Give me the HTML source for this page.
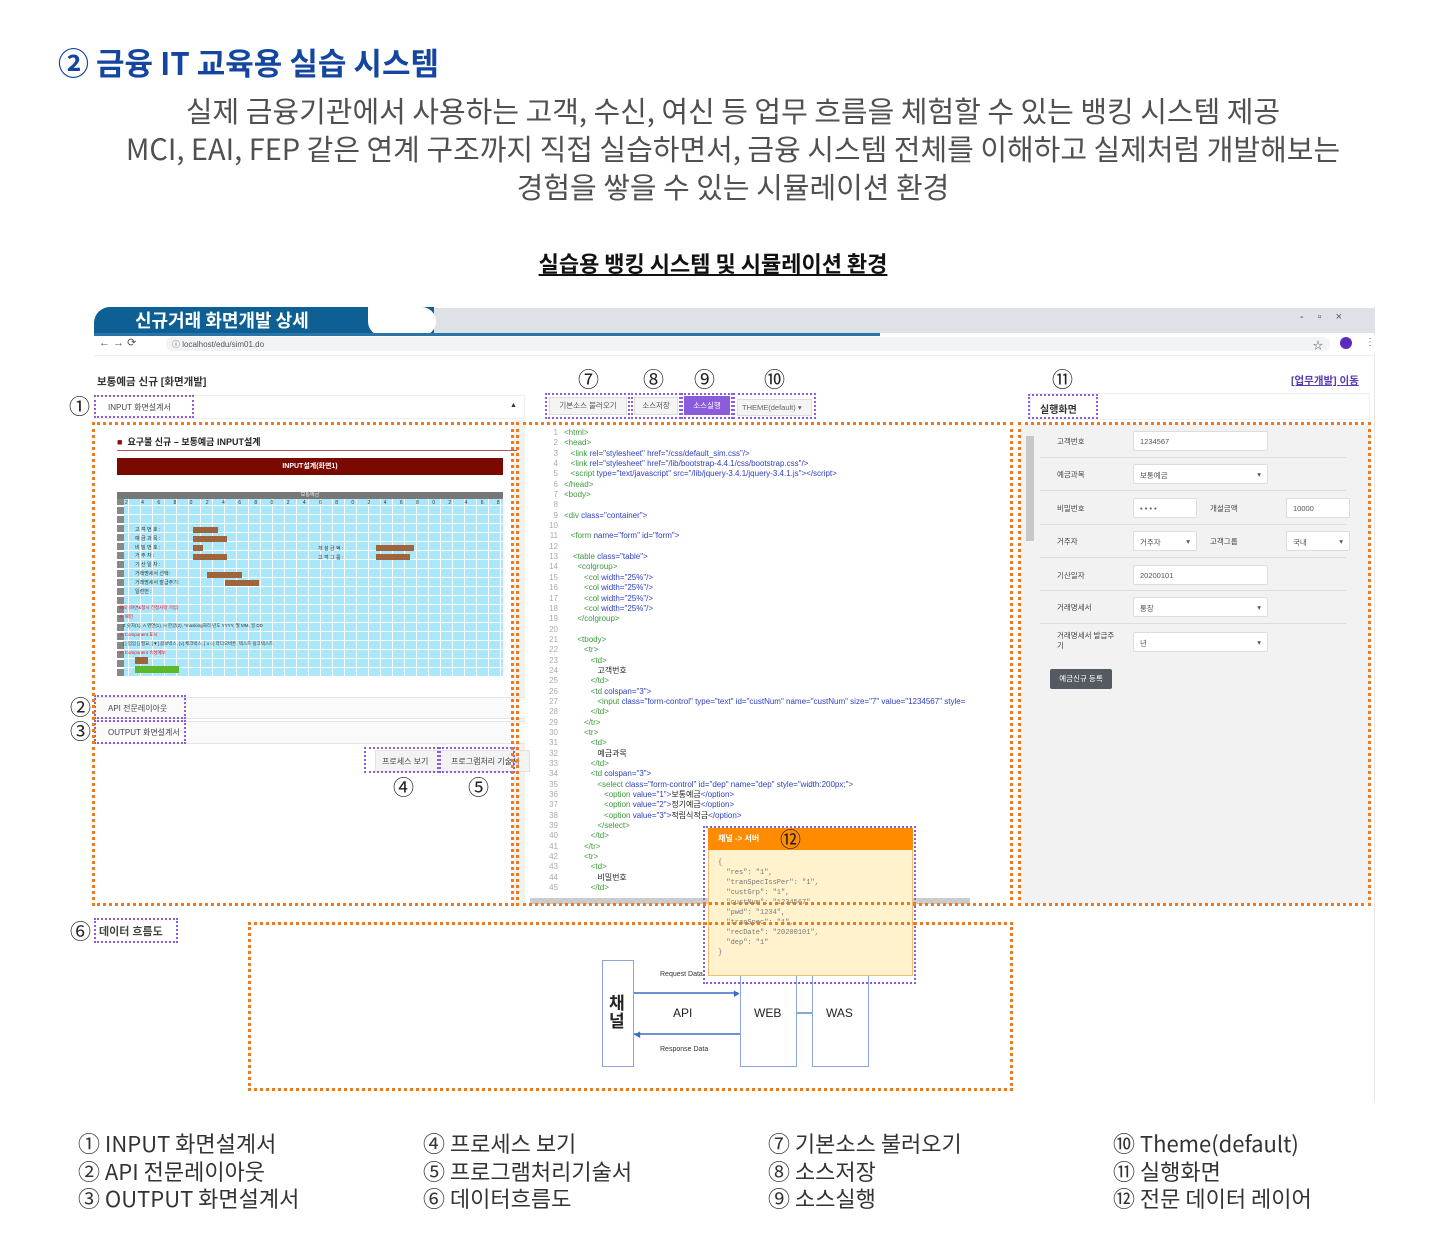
<!DOCTYPE html>
<html><head><meta charset="utf-8">
<style>
*{margin:0;padding:0;box-sizing:border-box}
body{width:1429px;height:1246px;background:#fff;position:relative;overflow:hidden;font-family:"Liberation Sans","Noto Sans CJK KR",sans-serif;color:#333}
.a{position:absolute;white-space:nowrap}
.od{position:absolute;border:3px dotted #ef7a1c}
.pd{position:absolute;border:2px dotted #8a5ce0}
.cn{position:absolute;font-size:21px;color:#222;font-family:"Noto Sans CJK KR",sans-serif;line-height:1}
.sub{position:absolute;left:0;width:1466px;text-align:center;font-size:29px;color:#505050;letter-spacing:0px;font-family:"Noto Sans CJK KR",sans-serif;line-height:1}
.tiny{font-size:8px;color:#444}
.code{position:absolute;left:530px;top:428px;font-family:"Liberation Sans","Noto Sans CJK KR",sans-serif;font-size:8px;line-height:10.35px;color:#2c3ec0}
.code div{white-space:nowrap}
.code i{font-style:normal;color:#aaa;display:inline-block;width:34px;text-align:right;padding-right:6px}
.g{color:#3a9a3a}.k{color:#222}
.lg{position:absolute;font-size:22px;color:#333;line-height:27.5px;font-family:"Noto Sans CJK KR",sans-serif}
.fr{position:absolute;font-size:7.5px;color:#444}
.inp{position:absolute;background:#fff;border:1px solid #ddd;border-radius:2px;font-size:7.5px;color:#555;padding:5px 6px;height:20px}
.hl{position:absolute;left:1040px;width:306px;height:1px;background:#ddd}
</style></head><body>

<div class="a" style="left:58px;top:43px;font-size:31px;font-weight:bold;color:#1446a0;font-family:'Noto Sans CJK KR',sans-serif;line-height:1.2">② 금융 IT 교육용 실습 시스템</div>
<div class="sub" style="top:96px">실제 금융기관에서 사용하는 고객, 수신, 여신 등 업무 흐름을 체험할 수 있는 뱅킹 시스템 제공</div>
<div class="sub" style="top:134px">MCI, EAI, FEP 같은 연계 구조까지 직접 실습하면서, 금융 시스템 전체를 이해하고 실제처럼 개발해보는</div>
<div class="sub" style="top:172px">경험을 쌓을 수 있는 시뮬레이션 환경</div>
<div class="a" style="left:0;width:1426px;text-align:center;top:247px;font-size:22px;font-weight:bold;color:#111;text-decoration:underline;letter-spacing:0px;font-family:'Noto Sans CJK KR',sans-serif">실습용 뱅킹 시스템 및 시뮬레이션 환경</div>

<!-- browser -->
<div class="a" style="left:94px;top:307px;width:1281px;height:795px;background:#fff;border-right:1px solid #e6e6e6"></div>
<div class="a" style="left:420px;top:308px;width:955px;height:25px;background:#dee1e6"></div>
<div class="a" style="left:94px;top:307px;width:340px;height:29px;background:#0e5f94;border-radius:16px 0 0 0"></div>
<div class="a" style="left:368px;top:307px;width:68px;height:29px;background:#fff;border-radius:0 30px 30px 30px"></div>
<div class="a" style="left:94px;top:333px;width:786px;height:3px;background:#2a74a8"></div>
<div class="a" style="left:135px;top:310px;font-size:18px;font-weight:bold;color:#fff;font-family:'Noto Sans CJK KR',sans-serif;line-height:1.2">신규거래 화면개발 상세</div>
<div class="a" style="left:1300px;top:311px;font-size:11px;color:#555;letter-spacing:14px">-▫×</div>
<div class="a" style="left:94px;top:336px;width:1281px;height:17px;background:#fff"></div>
<div class="a" style="left:166px;top:337px;width:1164px;height:14px;background:#f1f3f4;border-radius:7px"></div>
<div class="a" style="left:99px;top:336px;font-size:11px;color:#555">←  → ⟳</div>
<div class="a" style="left:172px;top:339px;font-size:8px;color:#555">ⓘ localhost/edu/sim01.do</div>
<div class="a" style="left:1313px;top:337px;font-size:10px;color:#555">☆</div>
<div class="a" style="left:1340px;top:337px;width:12px;height:12px;border-radius:6px;background:#5b2cc0"></div>
<div class="a" style="left:1365px;top:337px;font-size:10px;color:#666">⋮</div>
<div class="a" style="left:94px;top:355px;width:1281px;height:1px;background:#eee"></div>

<div class="a" style="left:97px;top:374px;font-size:10.5px;color:#333;font-weight:bold">보통예금 신규 [화면개발]</div>
<div class="a" style="left:1291px;top:373px;font-size:10.5px;color:#5a3ab0;text-decoration:underline;font-weight:bold">[업무개발] 이동</div>

<!-- left panel -->
<div class="a" style="left:94px;top:395px;width:431px;height:24px;background:#fff;border:1px solid #eee"></div>
<div class="pd" style="left:94px;top:395px;width:100px;height:23px"></div>
<div class="a tiny" style="left:108px;top:402px">INPUT 화면설계서</div>
<div class="a" style="left:510px;top:402px;font-size:7px">▲</div>
<div class="cn" style="left:69px;top:396px">①</div>
<div class="a" style="left:514px;top:420px;width:11px;height:485px;background:#f1f1f1"></div>

<div class="a" style="left:117px;top:435px;font-size:9px;font-weight:bold;color:#222"><span style="color:#900">■</span>&nbsp; 요구불 신규 – 보통예금 INPUT설계</div>
<div class="a" style="left:117px;top:450px;width:400px;height:1px;background:#b55"></div>
<div class="a" style="left:117px;top:458px;width:386px;height:17px;background:#7a0a00;color:#fff;font-size:7px;font-weight:bold;text-align:center;line-height:17px">INPUT설계(화면1)</div>
<div class="a" style="left:117px;top:492px;width:386px;height:7px;background:#777;color:#eee;font-size:5px;text-align:center;line-height:7px">보통예금</div>
<div class="a" style="left:117px;top:499px;width:386px;height:177px;background-color:#a9e8fb;background-image:repeating-linear-gradient(90deg,transparent 0,transparent 11px,#fff 11px,#fff 12px),repeating-linear-gradient(0deg,transparent 0,transparent 8px,#fff 8px,#fff 9px)"></div>
<div class="a" style="left:117px;top:499px;width:7px;height:177px;background:repeating-linear-gradient(0deg,#888 0,#888 7px,#fff 7px,#fff 9px)"></div>
<div class="a" style="left:125px;top:500px;width:376px;overflow:hidden;font-size:5px;color:#333;letter-spacing:6px">2 4 6 8 0 2 4 6 8 0 2 4 6 8 0 2 4 6 8 0 2 4 6 8 0 2 4 6 8 0</div>
<div class="a" style="left:135px;top:526px;font-size:5px;color:#333;line-height:8.8px">고 객 번 호 :<br>예 금 과 목 :<br>비 밀 번 호 :<br>거 주 자 :<br>기 산 일 자 :<br>거래명세서 선택:<br>거래명세서 발급주기:<br>일련번 : </div>
<div class="a" style="left:193px;top:527px;width:25px;height:6px;background:#a0643c"></div>
<div class="a" style="left:193px;top:536px;width:34px;height:6px;background:#a0643c"></div>
<div class="a" style="left:193px;top:545px;width:10px;height:6px;background:#a0643c"></div>
<div class="a" style="left:193px;top:554px;width:34px;height:6px;background:#a0643c"></div>
<div class="a" style="left:376px;top:545px;width:38px;height:6px;background:#a0643c"></div>
<div class="a" style="left:376px;top:554px;width:34px;height:6px;background:#a0643c"></div>
<div class="a" style="left:207px;top:572px;width:35px;height:6px;background:#a0643c"></div>
<div class="a" style="left:225px;top:580px;width:34px;height:6px;background:#a0643c"></div>
<div class="a" style="left:318px;top:545px;font-size:5px;color:#333;line-height:8.8px">개 설 금 액 :<br>고 객 그 룹 :</div>
<div class="a" style="left:119px;top:604px;font-size:4.5px;color:#e0102a;line-height:8.9px">메모 (화면&amp;정시 전정사항 기입)<br>※ 패턴<br><span style="color:#333">&nbsp;&nbsp;&nbsp;Z 숫자(1), A 영연(1), H 한글(2), *masking처리 년도 YYYY, 월 MM, 일 DD</span><br>※ Component 표시<br><span style="color:#333">&nbsp;&nbsp;&nbsp;[ ] 입입 [] 필요, [▼] 콤보박스, [v] 체크박스, [ o ○] 라디오버튼, 텍스트 링크텍스트</span><br>※ Component 속성예보</div>
<div class="a" style="left:135px;top:657px;width:13px;height:7px;background:#a0643c"></div>
<div class="a" style="left:135px;top:666px;width:44px;height:7px;background:#5bb82a"></div>

<div class="a" style="left:94px;top:697px;width:431px;height:22px;background:#fafafa;border-top:1px solid #e5e5e5;border-bottom:1px solid #e5e5e5"></div>
<div class="a" style="left:94px;top:721px;width:431px;height:23px;background:#fafafa;border-top:1px solid #e5e5e5;border-bottom:1px solid #e5e5e5"></div>
<div class="pd" style="left:94px;top:695px;width:92px;height:24px"></div>
<div class="pd" style="left:94px;top:720px;width:92px;height:24px"></div>
<div class="a tiny" style="left:108px;top:703px">API 전문레이아웃</div>
<div class="a tiny" style="left:108px;top:727px">OUTPUT 화면설계서</div>
<div class="cn" style="left:70px;top:697px">②</div>
<div class="cn" style="left:70px;top:721px">③</div>
<div class="a" style="left:375px;top:750px;width:155px;height:22px;background:#f3f3f3;border:1px solid #e2e2e2"></div>
<div class="pd" style="left:364px;top:747px;width:75px;height:26px"></div>
<div class="pd" style="left:439px;top:747px;width:76px;height:26px"></div>
<div class="a tiny" style="left:382px;top:756px">프로세스 보기</div>
<div class="a tiny" style="left:451px;top:756px">프로그램처리 기술서</div>
<div class="cn" style="left:393px;top:777px">④</div>
<div class="cn" style="left:468px;top:777px">⑤</div>
<div class="od" style="left:92px;top:422px;width:422px;height:484px"></div>

<!-- middle -->
<div class="pd" style="left:545px;top:393px;width:85px;height:26px"></div>
<div class="pd" style="left:631px;top:393px;width:50px;height:26px"></div>
<div class="pd" style="left:681px;top:393px;width:52px;height:26px"></div>
<div class="pd" style="left:733px;top:393px;width:83px;height:26px"></div>
<div class="a" style="left:549px;top:397px;width:78px;height:18px;background:#f4f4f4;border:1px solid #ddd;font-size:7.5px;color:#555;text-align:center;line-height:16px">기본소스 불러오기</div>
<div class="a" style="left:634px;top:397px;width:44px;height:18px;background:#f4f4f4;border:1px solid #ddd;font-size:7.5px;color:#555;text-align:center;line-height:16px">소스저장</div>
<div class="a" style="left:684px;top:396px;width:46px;height:19px;background:#8a5cdc;font-size:7.5px;color:#fff;text-align:center;line-height:19px">소스실행</div>
<div class="a" style="left:737px;top:399px;width:75px;height:17px;background:#f4f4f4;border:1px solid #ddd;font-size:7.5px;color:#666;line-height:16px;padding-left:4px">THEME(default) ▾</div>
<div class="cn" style="left:578px;top:369px">⑦</div>
<div class="cn" style="left:643px;top:369px">⑧</div>
<div class="cn" style="left:694px;top:369px">⑨</div>
<div class="cn" style="left:764px;top:369px">⑩</div>
<div class="a" style="left:530px;top:898px;width:440px;height:6px;background:#ccc"></div>
<div class="code">
<div><i>1</i><span class="g">&lt;html&gt;</span></div>
<div><i>2</i><span class="g">&lt;head&gt;</span></div>
<div><i>3</i>&nbsp;&nbsp;&nbsp;<span class="g">&lt;link</span> rel="stylesheet" href="/css/default_sim.css"/&gt;</div>
<div><i>4</i>&nbsp;&nbsp;&nbsp;<span class="g">&lt;link</span> rel="stylesheet" href="/lib/bootstrap-4.4.1/css/bootstrap.css"/&gt;</div>
<div><i>5</i>&nbsp;&nbsp;&nbsp;<span class="g">&lt;script</span> type="text/javascript" src="/lib/jquery-3.4.1/jquery-3.4.1.js"&gt;&lt;/script&gt;</div>
<div><i>6</i><span class="g">&lt;/head&gt;</span></div>
<div><i>7</i><span class="g">&lt;body&gt;</span></div>
<div><i>8</i></div>
<div><i>9</i><span class="g">&lt;div</span> class="container"&gt;</div>
<div><i>10</i></div>
<div><i>11</i>&nbsp;&nbsp;&nbsp;<span class="g">&lt;form</span> name="form" id="form"&gt;</div>
<div><i>12</i></div>
<div><i>13</i>&nbsp;&nbsp;&nbsp;&nbsp;<span class="g">&lt;table</span> class="table"&gt;</div>
<div><i>14</i>&nbsp;&nbsp;&nbsp;&nbsp;&nbsp;&nbsp;<span class="g">&lt;colgroup&gt;</span></div>
<div><i>15</i>&nbsp;&nbsp;&nbsp;&nbsp;&nbsp;&nbsp;&nbsp;&nbsp;&nbsp;<span class="g">&lt;col</span> width="25%"/&gt;</div>
<div><i>16</i>&nbsp;&nbsp;&nbsp;&nbsp;&nbsp;&nbsp;&nbsp;&nbsp;&nbsp;<span class="g">&lt;col</span> width="25%"/&gt;</div>
<div><i>17</i>&nbsp;&nbsp;&nbsp;&nbsp;&nbsp;&nbsp;&nbsp;&nbsp;&nbsp;<span class="g">&lt;col</span> width="25%"/&gt;</div>
<div><i>18</i>&nbsp;&nbsp;&nbsp;&nbsp;&nbsp;&nbsp;&nbsp;&nbsp;&nbsp;<span class="g">&lt;col</span> width="25%"/&gt;</div>
<div><i>19</i>&nbsp;&nbsp;&nbsp;&nbsp;&nbsp;&nbsp;<span class="g">&lt;/colgroup&gt;</span></div>
<div><i>20</i></div>
<div><i>21</i>&nbsp;&nbsp;&nbsp;&nbsp;&nbsp;&nbsp;<span class="g">&lt;tbody&gt;</span></div>
<div><i>22</i>&nbsp;&nbsp;&nbsp;&nbsp;&nbsp;&nbsp;&nbsp;&nbsp;&nbsp;<span class="g">&lt;tr&gt;</span></div>
<div><i>23</i>&nbsp;&nbsp;&nbsp;&nbsp;&nbsp;&nbsp;&nbsp;&nbsp;&nbsp;&nbsp;&nbsp;&nbsp;<span class="g">&lt;td&gt;</span></div>
<div><i>24</i>&nbsp;&nbsp;&nbsp;&nbsp;&nbsp;&nbsp;&nbsp;&nbsp;&nbsp;&nbsp;&nbsp;&nbsp;&nbsp;&nbsp;&nbsp;<span class="k">고객번호</span></div>
<div><i>25</i>&nbsp;&nbsp;&nbsp;&nbsp;&nbsp;&nbsp;&nbsp;&nbsp;&nbsp;&nbsp;&nbsp;&nbsp;<span class="g">&lt;/td&gt;</span></div>
<div><i>26</i>&nbsp;&nbsp;&nbsp;&nbsp;&nbsp;&nbsp;&nbsp;&nbsp;&nbsp;&nbsp;&nbsp;&nbsp;<span class="g">&lt;td</span> colspan="3"&gt;</div>
<div><i>27</i>&nbsp;&nbsp;&nbsp;&nbsp;&nbsp;&nbsp;&nbsp;&nbsp;&nbsp;&nbsp;&nbsp;&nbsp;&nbsp;&nbsp;&nbsp;<span class="g">&lt;input</span> class="form-control" type="text" id="custNum" name="custNum" size="7" value="1234567" style=</div>
<div><i>28</i>&nbsp;&nbsp;&nbsp;&nbsp;&nbsp;&nbsp;&nbsp;&nbsp;&nbsp;&nbsp;&nbsp;&nbsp;<span class="g">&lt;/td&gt;</span></div>
<div><i>29</i>&nbsp;&nbsp;&nbsp;&nbsp;&nbsp;&nbsp;&nbsp;&nbsp;&nbsp;<span class="g">&lt;/tr&gt;</span></div>
<div><i>30</i>&nbsp;&nbsp;&nbsp;&nbsp;&nbsp;&nbsp;&nbsp;&nbsp;&nbsp;<span class="g">&lt;tr&gt;</span></div>
<div><i>31</i>&nbsp;&nbsp;&nbsp;&nbsp;&nbsp;&nbsp;&nbsp;&nbsp;&nbsp;&nbsp;&nbsp;&nbsp;<span class="g">&lt;td&gt;</span></div>
<div><i>32</i>&nbsp;&nbsp;&nbsp;&nbsp;&nbsp;&nbsp;&nbsp;&nbsp;&nbsp;&nbsp;&nbsp;&nbsp;&nbsp;&nbsp;&nbsp;<span class="k">예금과목</span></div>
<div><i>33</i>&nbsp;&nbsp;&nbsp;&nbsp;&nbsp;&nbsp;&nbsp;&nbsp;&nbsp;&nbsp;&nbsp;&nbsp;<span class="g">&lt;/td&gt;</span></div>
<div><i>34</i>&nbsp;&nbsp;&nbsp;&nbsp;&nbsp;&nbsp;&nbsp;&nbsp;&nbsp;&nbsp;&nbsp;&nbsp;<span class="g">&lt;td</span> colspan="3"&gt;</div>
<div><i>35</i>&nbsp;&nbsp;&nbsp;&nbsp;&nbsp;&nbsp;&nbsp;&nbsp;&nbsp;&nbsp;&nbsp;&nbsp;&nbsp;&nbsp;&nbsp;<span class="g">&lt;select</span> class="form-control" id="dep" name="dep" style="width:200px;"&gt;</div>
<div><i>36</i>&nbsp;&nbsp;&nbsp;&nbsp;&nbsp;&nbsp;&nbsp;&nbsp;&nbsp;&nbsp;&nbsp;&nbsp;&nbsp;&nbsp;&nbsp;&nbsp;&nbsp;&nbsp;<span class="g">&lt;option</span> value="1"&gt;<span class="k">보통예금</span>&lt;/option&gt;</div>
<div><i>37</i>&nbsp;&nbsp;&nbsp;&nbsp;&nbsp;&nbsp;&nbsp;&nbsp;&nbsp;&nbsp;&nbsp;&nbsp;&nbsp;&nbsp;&nbsp;&nbsp;&nbsp;&nbsp;<span class="g">&lt;option</span> value="2"&gt;<span class="k">정기예금</span>&lt;/option&gt;</div>
<div><i>38</i>&nbsp;&nbsp;&nbsp;&nbsp;&nbsp;&nbsp;&nbsp;&nbsp;&nbsp;&nbsp;&nbsp;&nbsp;&nbsp;&nbsp;&nbsp;&nbsp;&nbsp;&nbsp;<span class="g">&lt;option</span> value="3"&gt;<span class="k">적립식적금</span>&lt;/option&gt;</div>
<div><i>39</i>&nbsp;&nbsp;&nbsp;&nbsp;&nbsp;&nbsp;&nbsp;&nbsp;&nbsp;&nbsp;&nbsp;&nbsp;&nbsp;&nbsp;&nbsp;<span class="g">&lt;/select&gt;</span></div>
<div><i>40</i>&nbsp;&nbsp;&nbsp;&nbsp;&nbsp;&nbsp;&nbsp;&nbsp;&nbsp;&nbsp;&nbsp;&nbsp;<span class="g">&lt;/td&gt;</span></div>
<div><i>41</i>&nbsp;&nbsp;&nbsp;&nbsp;&nbsp;&nbsp;&nbsp;&nbsp;&nbsp;<span class="g">&lt;/tr&gt;</span></div>
<div><i>42</i>&nbsp;&nbsp;&nbsp;&nbsp;&nbsp;&nbsp;&nbsp;&nbsp;&nbsp;<span class="g">&lt;tr&gt;</span></div>
<div><i>43</i>&nbsp;&nbsp;&nbsp;&nbsp;&nbsp;&nbsp;&nbsp;&nbsp;&nbsp;&nbsp;&nbsp;&nbsp;<span class="g">&lt;td&gt;</span></div>
<div><i>44</i>&nbsp;&nbsp;&nbsp;&nbsp;&nbsp;&nbsp;&nbsp;&nbsp;&nbsp;&nbsp;&nbsp;&nbsp;&nbsp;&nbsp;&nbsp;<span class="k">비밀번호</span></div>
<div><i>45</i>&nbsp;&nbsp;&nbsp;&nbsp;&nbsp;&nbsp;&nbsp;&nbsp;&nbsp;&nbsp;&nbsp;&nbsp;<span class="g">&lt;/td&gt;</span></div>
</div>
<div class="a" style="left:1013px;top:420px;width:6px;height:490px;background:#fff"></div>
<div class="od" style="left:516px;top:422px;width:497px;height:484px"></div>

<!-- right -->
<div class="a" style="left:1030px;top:393px;width:340px;height:27px;border:1px solid #eee;background:#fff"></div>
<div class="pd" style="left:1028px;top:394px;width:70px;height:25px"></div>
<div class="a" style="left:1040px;top:401px;font-size:10px;font-weight:bold;color:#333">실행화면</div>
<div class="cn" style="left:1052px;top:369px">⑪</div>
<div class="a" style="left:1020px;top:424px;width:350px;height:480px;background:#f2f2f2"></div>
<div class="a" style="left:1026px;top:436px;width:8px;height:105px;background:#c8c8c8"></div>
<div class="fr" style="left:1057px;top:436px">고객번호</div><div class="inp" style="left:1133px;top:431px;width:135px">1234567</div>
<div class="hl" style="top:457px"></div>
<div class="fr" style="left:1057px;top:469px">예금과목</div><div class="inp" style="left:1133px;top:464px;width:135px">보통예금<span style="float:right">▾</span></div>
<div class="hl" style="top:490px"></div>
<div class="fr" style="left:1057px;top:503px">비밀번호</div><div class="inp" style="left:1133px;top:498px;width:64px">• • • •</div>
<div class="fr" style="left:1210px;top:503px">개설금액</div><div class="inp" style="left:1286px;top:498px;width:64px">10000</div>
<div class="hl" style="top:524px"></div>
<div class="fr" style="left:1057px;top:536px">거주자</div><div class="inp" style="left:1133px;top:531px;width:64px">거주자<span style="float:right">▾</span></div>
<div class="fr" style="left:1210px;top:536px">고객그룹</div><div class="inp" style="left:1286px;top:531px;width:64px">국내<span style="float:right">▾</span></div>
<div class="hl" style="top:557px"></div>
<div class="fr" style="left:1057px;top:570px">기산일자</div><div class="inp" style="left:1133px;top:565px;width:135px">20200101</div>
<div class="hl" style="top:590px"></div>
<div class="fr" style="left:1057px;top:602px">거래명세서</div><div class="inp" style="left:1133px;top:597px;width:135px">통장<span style="float:right">▾</span></div>
<div class="hl" style="top:623px"></div>
<div class="fr" style="left:1057px;top:631px;line-height:10px">거래명세서 발급주<br>기</div><div class="inp" style="left:1133px;top:632px;width:135px">년<span style="float:right">▾</span></div>
<div class="a" style="left:1050px;top:669px;width:62px;height:20px;background:#555a60;border-radius:2px;color:#fff;font-size:7.5px;text-align:center;line-height:20px">예금신규 등록</div>
<div class="od" style="left:1018px;top:422px;width:353px;height:484px"></div>

<!-- data flow -->
<div class="a" style="left:94px;top:912px;width:944px;height:190px;background:#fff"></div>
<div class="pd" style="left:94px;top:918px;width:84px;height:25px"></div>
<div class="a" style="left:99px;top:923px;font-size:11px;font-weight:bold;color:#444">데이터 흐름도</div>
<div class="cn" style="left:70px;top:921px">⑥</div>
<div class="od" style="left:248px;top:922px;width:765px;height:169px"></div>
<div class="a" style="left:602px;top:960px;width:32px;height:107px;border:1.5px solid #8aa6d8"></div>
<div class="a" style="left:609px;top:993px;font-size:17px;font-weight:bold;color:#222;line-height:18px;font-family:'Noto Sans CJK KR',sans-serif">채<br>널</div>
<div class="a" style="left:740px;top:960px;width:57px;height:107px;border:1.5px solid #8aa6d8"></div>
<div class="a" style="left:812px;top:960px;width:57px;height:107px;border:1.5px solid #8aa6d8"></div>
<div class="a" style="left:797px;top:1012px;width:15px;height:1.5px;background:#8aa6d8"></div>
<div class="a" style="left:634px;top:992px;width:104px;height:1.5px;background:#6e8fd0"></div>
<div class="a" style="left:733px;top:989px;font-size:7px;color:#3a6ad0">▶</div>
<div class="a" style="left:634px;top:1033px;width:106px;height:1.5px;background:#6e8fd0"></div>
<div class="a" style="left:634px;top:1030px;font-size:7px;color:#3a6ad0">◀</div>
<div class="a" style="left:660px;top:971px;font-size:7px;color:#333">Request Data</div>
<div class="a" style="left:660px;top:1046px;font-size:7px;color:#333">Response Data</div>
<div class="a" style="left:673px;top:1006px;font-size:12px;color:#222">API</div>
<div class="a" style="left:754px;top:1006px;font-size:12px;color:#222">WEB</div>
<div class="a" style="left:826px;top:1006px;font-size:12px;color:#222">WAS</div>

<!-- popup -->
<div class="a" style="left:708px;top:828px;width:205px;height:148px;background:#fff2cc;border:1px solid #f0c070"></div>
<div class="a" style="left:708px;top:828px;width:205px;height:22px;background:#ff8c00;color:#fff;font-size:8px;font-weight:bold;line-height:22px;padding-left:10px">채널 -&gt; 서버</div>
<div class="a" style="left:718px;top:858px;font-family:'Liberation Mono',monospace;font-size:7px;line-height:10px;color:#777">{<br>&nbsp;&nbsp;"res": "1",<br>&nbsp;&nbsp;"tranSpecIssPer": "1",<br>&nbsp;&nbsp;"custGrp": "1",<br>&nbsp;&nbsp;"custNum": "1234567",<br>&nbsp;&nbsp;"pwd": "1234",<br>&nbsp;&nbsp;"tranSpec": "1",<br>&nbsp;&nbsp;"recDate": "20200101",<br>&nbsp;&nbsp;"dep": "1"<br>}</div>
<div class="pd" style="left:703px;top:826px;width:213px;height:158px"></div>
<div class="cn" style="left:780px;top:829px">⑫</div>
<div class="a" style="left:703px;top:902px;width:213px;height:3px;border-top:3px dotted #ef7a1c"></div>
<div class="a" style="left:703px;top:922px;width:213px;height:3px;border-top:3px dotted #ef7a1c"></div>

<!-- legend -->
<div class="lg" style="left:78px;top:1130px">① INPUT 화면설계서<br>② API 전문레이아웃<br>③ OUTPUT 화면설계서</div>
<div class="lg" style="left:423px;top:1130px">④ 프로세스 보기<br>⑤ 프로그램처리기술서<br>⑥ 데이터흐름도</div>
<div class="lg" style="left:768px;top:1130px">⑦ 기본소스 불러오기<br>⑧ 소스저장<br>⑨ 소스실행</div>
<div class="lg" style="left:1113px;top:1130px">⑩ Theme(default)<br>⑪ 실행화면<br>⑫ 전문 데이터 레이어</div>
</body></html>
